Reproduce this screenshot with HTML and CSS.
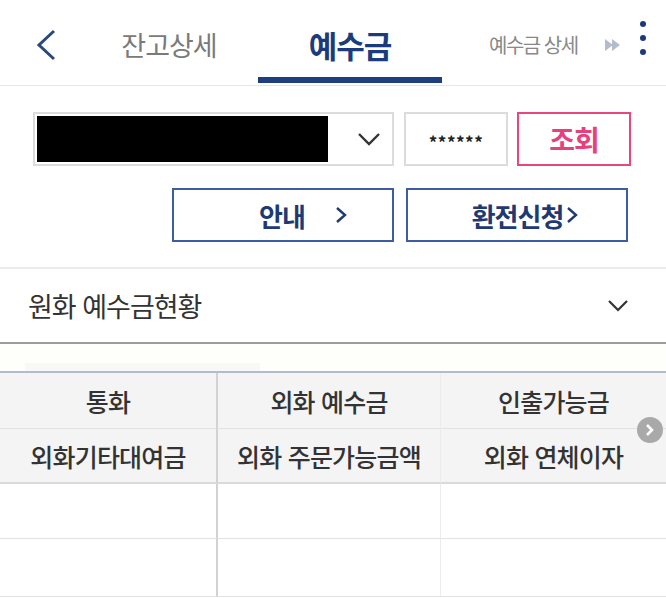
FILE: index.html
```html
<!DOCTYPE html>
<html lang="ko">
<head>
    <meta charset="UTF-8">
    <meta name="viewport" content="width=device-width, initial-scale=1.0">
    <title>예수금</title>
    <link rel="stylesheet" href="styles.css">
</head>
<body>
    <div class="header">
        <a href="#" class="back">
            <svg width="22" height="32" viewBox="0 0 22 32"><path d="M19 2 L4 16 L19 30" fill="none" stroke="#27497f" stroke-width="3"/></svg>
        </a>
        <div class="tab tab-first">잔고상세</div>
        <div class="tab tab-active">예수금</div>
        <div class="tab tab-small">예수금 상세</div>
        <div class="more-arrow">
            <svg width="16" height="12" viewBox="0 0 16 12"><path d="M0 0 L8 6 L0 12 Z M7 0 L15 6 L7 12 Z" fill="#b3bccb"/></svg>
        </div>
        <div class="kebab"><span></span><span></span><span></span></div>
    </div>

    <div class="form-row">
        <div class="account-select">
            <div class="account-mask"></div>
            <svg class="select-arrow" width="24" height="14" viewBox="0 0 24 14"><path d="M2 2 L12 12 L22 2" fill="none" stroke="#333" stroke-width="2.4"/></svg>
        </div>
        <div class="password-box">******</div>
        <button class="search-btn">조회</button>
    </div>

    <div class="btn-row">
        <button class="link-btn guide-btn">
            안내
            <svg class="btn-arrow wide" width="12" height="18" viewBox="0 0 12 18"><path d="M2 2 L10 9 L2 16" fill="none" stroke="#1e3a74" stroke-width="2.4"/></svg>
        </button>
        <button class="link-btn">
            환전신청
            <svg class="btn-arrow" width="12" height="18" viewBox="0 0 12 18"><path d="M2 2 L10 9 L2 16" fill="none" stroke="#1e3a74" stroke-width="2.4"/></svg>
        </button>
    </div>

    <div class="section-head">
        <span>원화 예수금현황</span>
        <svg width="22" height="14" viewBox="0 0 22 14"><path d="M2 2 L11 11 L20 2" fill="none" stroke="#333" stroke-width="2.2"/></svg>
    </div>

    <div class="spacer"><div class="spacer-bar"></div></div>

    <div class="table-wrap">
        <div class="grid">
            <div class="cell th row-1">통화</div>
            <div class="cell th row-1">외화 예수금</div>
            <div class="cell th row-1">인출가능금</div>
            <div class="cell th row-2">외화기타대여금</div>
            <div class="cell th row-2">외화 주문가능금액</div>
            <div class="cell th row-2">외화 연체이자</div>
            <div class="cell td row-3"></div>
            <div class="cell td row-3"></div>
            <div class="cell td row-3"></div>
            <div class="cell td row-4"></div>
            <div class="cell td row-4"></div>
            <div class="cell td row-4"></div>
        </div>
        <div class="scroll-hint">
            <svg width="12" height="14" viewBox="0 0 12 14"><path d="M3 2 L8 7 L3 12" fill="none" stroke="#fff" stroke-width="2.6"/></svg>
        </div>
    </div>
</body>
</html>
```

FILE: styles.css
```css
body {
    margin: 0;
    width: 666px;
    height: 598px;
    overflow: hidden;
    background: #fff;
    font-family: "Noto Sans CJK KR", "Noto Sans", sans-serif;
    color: #333;
}
.header {
    display: flex;
    height: 86px;
    box-sizing: border-box;
    padding-bottom: 2px;
    border-bottom: 1px solid #e6e6e6;
}
.back {
    width: 80px;
    display: flex;
    align-items: center;
    padding-left: 35px;
    padding-top: 6px;
    box-sizing: border-box;
}
.tab {
    display: flex;
    align-items: center;
    justify-content: center;
    box-sizing: border-box;
    padding-top: 6px;
    color: #7a7a7a;
}
.tab-first {
    width: 178px;
    font-size: 27px;
    letter-spacing: -1px;
}
.tab-active {
    width: 184px;
    font-size: 31px;
    font-weight: 700;
    color: #1b3c7c;
    border-bottom: 6px solid #1d3f80;
    padding-top: 12px;
    letter-spacing: -1px;
}
.tab-small {
    width: 158px;
    justify-content: flex-start;
    padding-left: 47px;
    font-size: 20px;
    letter-spacing: -1.5px;
    color: #888;
}
.more-arrow {
    width: 26px;
    display: flex;
    align-items: center;
    justify-content: center;
    padding-top: 6px;
}
.kebab {
    width: 38px;
    display: flex;
    flex-direction: column;
    align-items: center;
    gap: 8px;
    padding-top: 21px;
    padding-right: 4px;
    box-sizing: border-box;
}
.kebab span {
    width: 6px;
    height: 6px;
    border-radius: 50%;
    background: #1d3a78;
}
.form-row {
    display: flex;
    margin-top: 26px;
    padding-left: 33px;
    height: 54px;
}
.account-select {
    width: 361px;
    box-sizing: border-box;
    border: 2px solid #dcdcdc;
    padding: 2px;
    display: flex;
    align-items: center;
}
.account-mask {
    width: 291px;
    height: 46px;
    background: #000;
}
.select-arrow {
    margin-left: 29px;
}
.password-box {
    width: 104px;
    margin-left: 10px;
    box-sizing: border-box;
    border: 2px solid #dcdcdc;
    display: flex;
    align-items: center;
    justify-content: center;
    font-size: 17px;
    font-weight: 700;
    letter-spacing: 0.5px;
    color: #222;
    padding-top: 5px;
}
.search-btn {
    width: 114px;
    margin-left: 9px;
    background: #fff;
    border: 2px solid #ea4580;
    color: #e8407c;
    font-family: inherit;
    font-size: 28px;
    font-weight: 700;
    padding: 0;
    letter-spacing: -1px;
}
.btn-row {
    display: flex;
    justify-content: flex-end;
    gap: 12px;
    margin-top: 22px;
    padding-right: 38px;
    height: 54px;
}
.link-btn {
    width: 222px;
    background: #fff;
    border: 2px solid #3d5ca6;
    color: #1e3a74;
    font-family: inherit;
    font-size: 26px;
    font-weight: 700;
    padding: 0 0 0 16px;
    letter-spacing: -1px;
    display: flex;
    align-items: center;
    justify-content: center;
}
.guide-btn {
    padding-left: 40px;
}
.btn-arrow {
    margin-left: 3px;
}
.btn-arrow.wide {
    margin-left: 30px;
}
.section-head {
    margin-top: 25px;
    height: 77px;
    box-sizing: border-box;
    border-top: 2px solid #ebebeb;
    border-bottom: 2px solid #9c9c9c;
    display: flex;
    align-items: center;
    justify-content: space-between;
    padding: 0 37px 0 28px;
    font-size: 27px;
    letter-spacing: -1px;
    color: #333;
}
.spacer {
    height: 27px;
    background: #fefefb;
    display: flex;
    align-items: flex-end;
    padding-left: 25px;
}
.spacer-bar {
    width: 235px;
    height: 8px;
    background: #f8f8f6;
}
.table-wrap {
    position: relative;
    border-top: 2px solid #b3bccf;
}
.grid {
    display: grid;
    grid-template-columns: 216px 224px 226px;
}
.cell {
    display: flex;
    align-items: center;
    justify-content: center;
    border-bottom: 1px solid #e2e2e2;
    border-left: 1px solid #ececec;
    box-sizing: border-box;
}
.cell:nth-child(3n+1) {
    border-left: none;
}
.cell:nth-child(3n+2) {
    border-left: 2px solid #d2d2d2;
}
.th {
    background: #f4f4f4;
    font-size: 25px;
    font-weight: 500;
    color: #333;
    letter-spacing: -0.8px;
}
.row-1 {
    height: 56px;
}
.row-2 {
    height: 55px;
    border-bottom: 2px solid #dadada;
}
.row-3 {
    height: 55px;
    background: #fff;
}
.row-4 {
    height: 58px;
    background: #fff;
}
.scroll-hint {
    position: absolute;
    right: 3px;
    top: 44px;
    width: 26px;
    height: 26px;
    border-radius: 50%;
    background: #a9a9a9;
    display: flex;
    align-items: center;
    justify-content: center;
}
```
